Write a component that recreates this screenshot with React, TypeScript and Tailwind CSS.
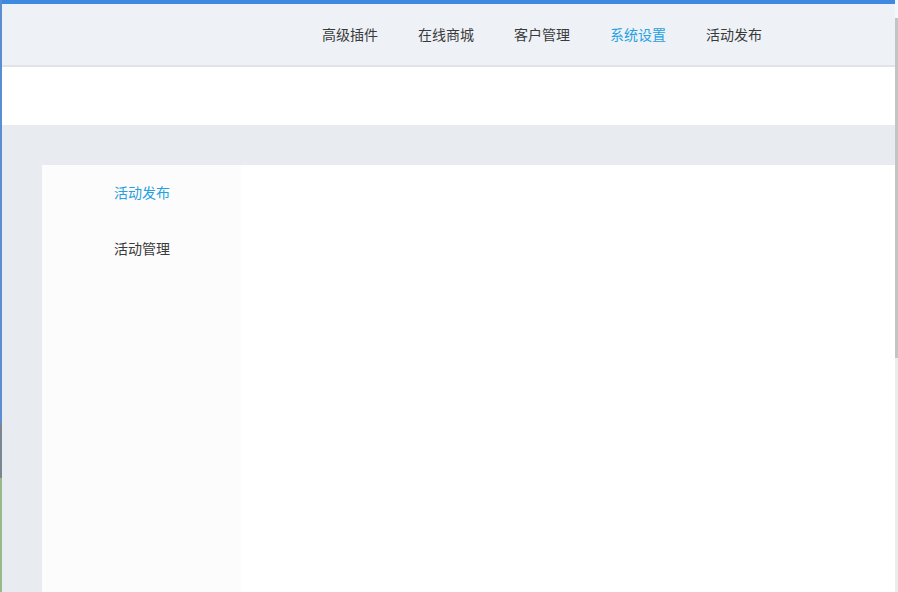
const navItems = ["高级插件", "在线商城", "客户管理", "系统设置", "活动发布"];
const activeNav = "系统设置";

const sideItems = ["活动发布", "活动管理"];
const activeSide = "活动发布";

export default function App() {
  return (
    <div
      className="flex h-[592px] w-[898px] overflow-hidden bg-white"
      style={{ fontFamily: '"Microsoft YaHei", "Noto Sans CJK SC", sans-serif' }}
    >
      {/* desktop edge peeking through on the left */}
      <div className="flex w-[2px] flex-col">
        <div className="h-[423px] bg-[#5b8dd2]" />
        <div className="h-[55px] bg-[#7d8590]" />
        <div className="flex-1 bg-[#9bb88a]" />
      </div>

      <div className="flex flex-1 flex-col">
        <div className="h-1 bg-[#3f8ae0]" />
        <header className="flex h-[63px] items-center border-b-2 border-[#e0e4e9] bg-[#eef2f7] pb-0.5 pl-[320px]">
          <nav className="flex gap-10">
            {navItems.map((n) => (
              <span key={n} className={`text-sm ${n === activeNav ? "text-[#26a0e0]" : "text-[#3a3a3a]"}`}>
                {n}
              </span>
            ))}
          </nav>
        </header>
        <div className="h-[58px] bg-white" />
        <div className="flex flex-1 flex-col bg-[#e8ecf1] pl-10 pt-10">
          <div className="flex flex-1 bg-white">
            <aside className="w-[199px] bg-[#fcfcfd]">
              {sideItems.map((s) => (
                <div
                  key={s}
                  className={`flex h-14 items-center pb-0.5 pl-[72px] text-sm ${s === activeSide ? "text-[#26a0e0]" : "text-[#3a3a3a]"}`}
                >
                  {s}
                </div>
              ))}
            </aside>
            <main className="flex-1 bg-white" />
          </div>
        </div>
      </div>

      {/* scrollbar */}
      <div className="flex w-[3px] flex-col bg-[#f0f0f0]">
        <div className="h-[18px] bg-[#f4f7fb]" />
        <div className="h-[340px] bg-[#c4c4c4]" />
        <div className="flex-1 bg-[#ececec]" />
      </div>
    </div>
  );
}
